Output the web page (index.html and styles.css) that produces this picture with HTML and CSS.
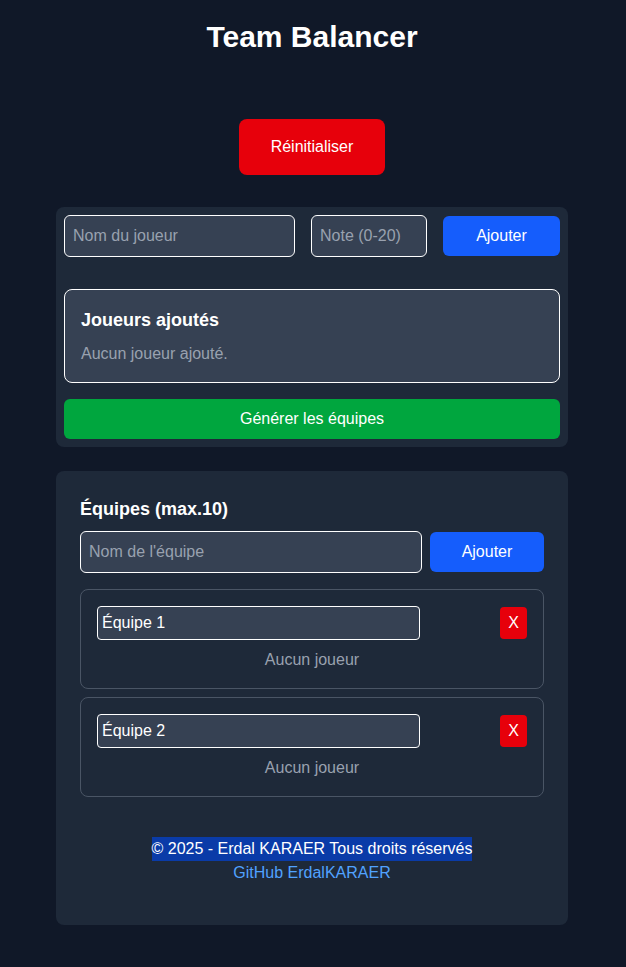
FILE: index.html
```html
<!DOCTYPE html>
<html lang="fr">
<head>
<meta charset="utf-8">
<title>Team Balancer</title>
<link rel="stylesheet" href="styles.css">
</head>
<body>
<div class="page">
  <h1 class="title">Team Balancer</h1>
  <button class="btn btn-red reset-btn">Réinitialiser</button>

  <section class="card players-card">
    <div class="player-form">
      <input class="field" type="text" placeholder="Nom du joueur">
      <input class="field" type="text" placeholder="Note (0-20)">
      <button class="btn btn-blue">Ajouter</button>
    </div>
    <div class="players-box">
      <h2 class="section-title">Joueurs ajoutés</h2>
      <p class="muted players-empty">Aucun joueur ajouté.</p>
    </div>
    <button class="btn btn-green generate-btn">Générer les équipes</button>
  </section>

  <section class="card teams-card">
    <h2 class="section-title teams-title">Équipes (max.10)</h2>
    <div class="team-form">
      <input class="field" type="text" placeholder="Nom de l'équipe">
      <button class="btn btn-blue">Ajouter</button>
    </div>
    <div class="team-list">
      <div class="team-card">
        <div class="team-head">
          <input class="team-input" type="text" value="Équipe 1">
          <button class="btn btn-red remove-btn">X</button>
        </div>
        <p class="muted team-empty">Aucun joueur</p>
      </div>
      <div class="team-card">
        <div class="team-head">
          <input class="team-input" type="text" value="Équipe 2">
          <button class="btn btn-red remove-btn">X</button>
        </div>
        <p class="muted team-empty">Aucun joueur</p>
      </div>
    </div>
    <footer class="footer">
      <p class="copyright"><span class="copy-mark">© 2025 - Erdal KARAER Tous droits réservés</span></p>
      <a class="footer-link" href="#">GitHub ErdalKARAER</a>
    </footer>
  </section>
</div>
</body>
</html>
```

FILE: styles.css
```css
* {
  box-sizing: border-box;
}

html, body {
  margin: 0;
  padding: 0;
}

body {
  background: #101828;
  color: #ffffff;
  font-family: "Liberation Sans", Arial, sans-serif;
  font-size: 16px;
  line-height: 24px;
  min-height: 967px;
}

.page {
  display: flex;
  flex-direction: column;
  align-items: center;
  padding: 19px 2px 42px 0;
}

.title {
  margin: 0 0 64px;
  font-size: 30px;
  line-height: 36px;
  font-weight: 700;
}

.btn {
  font-family: "Liberation Sans", Arial, sans-serif;
  font-size: 16px;
  line-height: 24px;
  color: #ffffff;
  border: none;
  cursor: pointer;
  padding: 8px 16px;
  border-radius: 6px;
}

.btn-red { background: #e7000b; }
.btn-blue { background: #155dfc; }
.btn-green { background: #00a63e; }

.reset-btn {
  padding: 16px 32px;
  border-radius: 8px;
}

.card {
  width: 512px;
  background: #1e2939;
  border-radius: 8px;
}

.players-card {
  margin-top: 32px;
  padding: 8px;
}

.player-form {
  display: grid;
  grid-template-columns: 231fr 116fr 117fr;
  gap: 16px;
  align-items: center;
}

.field {
  width: 100%;
  min-width: 0;
  font-family: "Liberation Sans", Arial, sans-serif;
  font-size: 16px;
  line-height: 24px;
  padding: 8px;
  color: #ffffff;
  background: #364153;
  border: 1px solid #ffffff;
  border-radius: 6px;
  outline: none;
}

.field::placeholder {
  color: #99a1af;
}

.players-box {
  margin-top: 32px;
  padding: 16px;
  background: #364153;
  border: 1px solid #ffffff;
  border-radius: 8px;
}

.section-title {
  margin: 0;
  font-size: 18px;
  line-height: 28px;
  font-weight: 700;
}

.muted {
  color: #99a1af;
}

.players-empty {
  margin: 8px 0 0;
}

.generate-btn {
  display: block;
  width: 100%;
  margin-top: 16px;
}

.teams-card {
  margin-top: 24px;
  padding: 24px;
}

.teams-title {
  margin-bottom: 8px;
}

.team-form {
  display: grid;
  grid-template-columns: 3fr 1fr;
  align-items: center;
  gap: 8px;
  margin-bottom: 16px;
}

.team-list {
  display: flex;
  flex-direction: column;
  gap: 8px;
}

.team-card {
  border: 1px solid #4a5565;
  border-radius: 8px;
  padding: 16px;
}

.team-head {
  display: flex;
  justify-content: space-between;
  align-items: center;
}

.team-input {
  width: 75%;
  font-family: "Liberation Sans", Arial, sans-serif;
  font-size: 16px;
  line-height: 24px;
  padding: 4px;
  color: #ffffff;
  background: #364153;
  border: 1px solid #ffffff;
  border-radius: 4px;
  outline: none;
}

.remove-btn {
  padding: 4px 8px;
  border-radius: 4px;
}

.team-empty {
  margin: 8px 0 0;
  text-align: center;
}

.footer {
  margin-top: 24px;
  padding: 16px;
  text-align: center;
}

.copyright {
  margin: 0;
}

.copy-mark {
  display: inline-block;
  line-height: 24px;
  background: #0a3ba8;
  color: #ffffff;
}

.footer-link {
  color: #51a2ff;
  text-decoration: none;
}
```
